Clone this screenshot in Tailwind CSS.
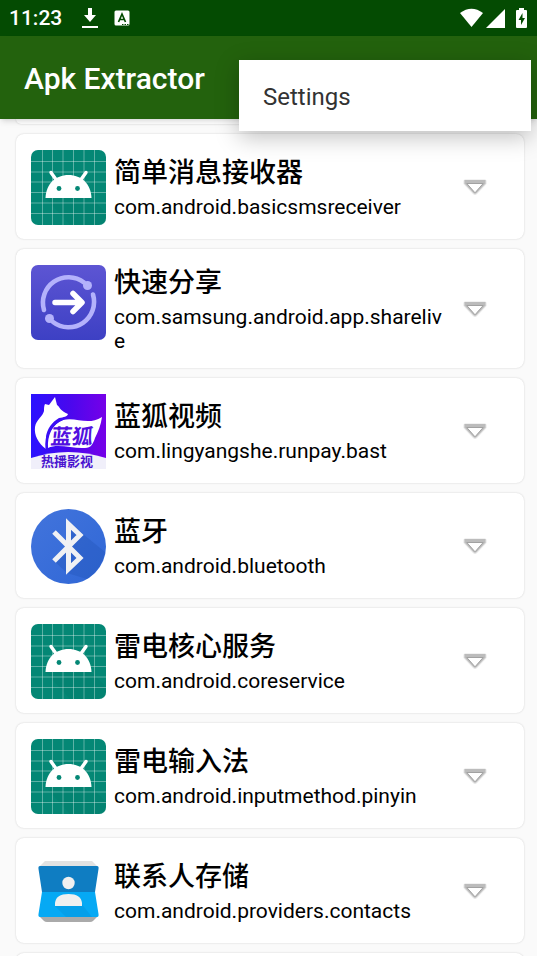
<!DOCTYPE html>
<html lang="zh-CN">
  <head>
    <meta charset="UTF-8" />
    <meta name="viewport" content="width=device-width, initial-scale=1.0" />
    <script src="https://cdn.jsdelivr.net/npm/@tailwindcss/browser@4"></script>
    <title>Apk Extractor</title>
  </head>
  <body class="relative flex h-screen flex-col overflow-hidden bg-[#fafafa] font-[Roboto,'Noto_Sans_CJK_SC',sans-serif] text-black">
    <!-- Shared icons -->
    <svg class="hidden">
      <symbol id="android" viewBox="0 0 75 75">
        <rect width="75" height="75" rx="7" fill="#048775" />
        <path d="M14.500 48 L39 75 H68 Q75 75 75 68 V63 L60 48 Z" fill="#027a69" opacity=".35" />
        <path d="M11.500 0V75M21.500 0V75M32 0V75M42.500 0V75M53 0V75M63.500 0V75M0 11.500H75M0 22H75M0 32H75M0 42.500H75M0 53H75M0 63.500H75" stroke="#fff" stroke-opacity=".45" stroke-width=".8" />
        <path d="M20 22.500l5 7M55 22.500l-5 7" stroke="#fff" stroke-width="3.400" stroke-linecap="round" />
        <path d="M14.500 48C15 34 24.500 25 37.500 25S60 34 60.500 48Z" fill="#fff" />
        <circle cx="28" cy="38.500" r="2.400" fill="#048775" />
        <circle cx="46.500" cy="38.500" r="2.400" fill="#048775" />
      </symbol>
      <symbol id="arrow" viewBox="0 0 24 18">
        <path d="M0.500 3Q.5 1.500 2 1.500H22Q23.500 1.500 23.500 3V6L14 16Q12 18 10 16L.5 6Z" fill="#000" opacity=".1" />
        <path d="M1.500 2H22.500V5.500L13.500 15Q12 16.500 10.500 15L1.500 5.500Z" fill="#bcbcbc" />
        <path d="M3.800 5.500H20.200L12 14.800Z" fill="#fff" stroke="#a2a2a2" stroke-width="1" />
      </symbol>
    </svg>

    <!-- Status bar -->
    <div class="flex h-9 shrink-0 items-center bg-[#044b02] pl-[9px] pr-[10px] text-white">
      <span class="text-[21px] leading-9 font-medium">11:23</span>
      <svg class="ml-5 h-5 w-4" viewBox="0 0 16 20" fill="#fff">
        <path d="M6 0h4v7h4l-6 7-6-7h4zM0 18h16v2H0z" />
      </svg>
      <svg class="ml-4 size-4" viewBox="0 0 16 16">
        <rect x=".5" y=".5" width="15" height="15" rx="1.500" fill="#fff" />
        <path d="M4.500 12L8 4L11.500 12M5.800 9.500H10.200" fill="none" stroke="#044b02" stroke-width="1.700" />
        <path d="M8 14.500H15" stroke="#044b02" stroke-dasharray="1.500 1" />
      </svg>
      <svg class="ml-auto h-5 w-[23px]" viewBox="0 0 23 20" fill="#fff">
        <path d="M0 5Q11.500-3.500 23 5L11.500 19Z" />
      </svg>
      <svg class="ml-[3px] size-[19px]" viewBox="0 0 19 19" fill="#fff">
        <path d="M0 19L19 0V19Z" />
      </svg>
      <svg class="ml-[11px] h-5 w-[11px]" viewBox="0 0 11 20">
        <path d="M3 0H8V2H10Q11 2 11 3V19Q11 20 10 20H1Q0 20 0 19V3Q0 2 1 2H3Z" fill="#fff" />
        <path d="M6.500 5L2.500 12H5V17L9 10H6.500Z" fill="#044b02" />
      </svg>
    </div>

    <!-- App bar -->
    <header class="z-10 flex h-[83px] shrink-0 items-center bg-[#23620d] px-6 pt-[2px] shadow-md">
      <h1 class="text-[30px] font-medium text-white">Apk Extractor</h1>
    </header>

    <!-- Overflow menu -->
    <div class="absolute top-[60px] right-[6px] z-20 w-[292px] bg-white shadow-[0_6px_22px_rgba(0,0,0,0.25)]">
      <button class="h-[71px] w-full px-6 pt-[2px] text-left text-[24px] text-[#333]">Settings</button>
    </div>

    <!-- App list -->
    <ul class="flex min-h-0 flex-1 flex-col gap-[10px] overflow-y-auto pr-[13px] pl-4 [scrollbar-width:none]">
      <li class="h-[5px] shrink-0 rounded-b-lg bg-white shadow-[0_0_2px_rgba(0,0,0,0.18)]"></li>

      <li class="flex min-h-[105px] shrink-0 rounded-lg bg-white pl-[15px] shadow-[0_0_2px_rgba(0,0,0,0.18)]">
        <svg class="mt-4 size-[75px] shrink-0"><use href="#android" /></svg>
        <div class="ml-2 flex min-w-0 flex-1 flex-col justify-center gap-[6px] pt-[2px]">
          <h2 class="text-[27px] leading-8 font-medium">简单消息接收器</h2>
          <p class="text-[21px] leading-6 break-all">com.android.basicsmsreceiver</p>
        </div>
        <button class="mr-[37px] ml-5 self-center" aria-label="简单消息接收器"><svg class="h-[18px] w-6"><use href="#arrow" /></svg></button>
      </li>

      <li class="flex min-h-[119px] shrink-0 rounded-lg bg-white pl-[15px] shadow-[0_0_2px_rgba(0,0,0,0.18)]">
        <svg class="mt-4 size-[75px] shrink-0" viewBox="0 0 75 75" fill="none">
          <linearGradient id="share" x2="0" y2="1"><stop stop-color="#5d55d3" /><stop offset="1" stop-color="#3d40c4" /></linearGradient>
          <rect width="75" height="75" rx="7" fill="url(#share)" />
          <path d="M13 45A25.500 25.500 0 0 1 53 17.500M62 29.500A25.500 25.500 0 0 1 22 57" stroke="#b4b2fb" stroke-width="4.600" stroke-linecap="round" />
          <circle cx="56.500" cy="20.500" r="4.500" fill="#b4b2fb" />
          <circle cx="18.500" cy="53.500" r="4.500" fill="#b4b2fb" />
          <path d="M24 37.500H50M42 28.500L51 37.500L42 46.500" stroke="#fff" stroke-width="5.500" stroke-linecap="round" stroke-linejoin="round" />
        </svg>
        <div class="ml-2 flex min-w-0 flex-1 flex-col justify-center gap-[6px] pt-[2px]">
          <h2 class="text-[27px] leading-8 font-medium">快速分享</h2>
          <p class="text-[21px] leading-6 break-all">com.samsung.android.app.sharelive</p>
        </div>
        <button class="mr-[37px] ml-5 self-center" aria-label="快速分享"><svg class="h-[18px] w-6"><use href="#arrow" /></svg></button>
      </li>

      <li class="flex min-h-[105px] shrink-0 rounded-lg bg-white pl-[15px] shadow-[0_0_2px_rgba(0,0,0,0.18)]">
        <svg class="mt-4 size-[75px] shrink-0" viewBox="0 0 75 75">
          <linearGradient id="fox" y2="0"><stop stop-color="#2a12ff" /><stop offset=".5" stop-color="#4808ee" /><stop offset="1" stop-color="#7600e8" /></linearGradient>
          <rect width="75" height="75" fill="url(#fox)" />
          <path d="M0 64Q37 52 75 64V75H0Z" fill="#f0effa" />
          <path d="M15 55C7 49 3 41 4 33C5 26 12 22 13 17C13 14 13 12 14 10L18 11L24 3L26 11C29 13 29 17 37 20C36 23 33 23 28 24C21 28 16 35 15 43Z" fill="#fff" />
          <path d="M17 54C16 42 21 30 32 26C46 23 57 32 71 23C70 31 67 38 64 44C62 50 60 54 54 54C42 55 27 49 17 54Z" fill="#fff" />
          <path d="M15.500 55C14 41 20 29 33 24.500" fill="none" stroke="#3a10f5" stroke-width="2" />
          <text x="26" y="50" transform="skewX(-8)" class="font-['Noto_Sans_CJK_SC',sans-serif] text-[21px] font-bold" fill="#5210df">蓝狐</text>
          <text x="10" y="72" class="font-['Noto_Sans_CJK_SC',sans-serif] text-[13px] leading-none font-bold" fill="#4a14d0">热播影视</text>
        </svg>
        <div class="ml-2 flex min-w-0 flex-1 flex-col justify-center gap-[6px] pt-[2px]">
          <h2 class="text-[27px] leading-8 font-medium">蓝狐视频</h2>
          <p class="text-[21px] leading-6 break-all">com.lingyangshe.runpay.bast</p>
        </div>
        <button class="mr-[37px] ml-5 self-center" aria-label="蓝狐视频"><svg class="h-[18px] w-6"><use href="#arrow" /></svg></button>
      </li>

      <li class="flex min-h-[105px] shrink-0 rounded-lg bg-white pl-[15px] shadow-[0_0_2px_rgba(0,0,0,0.18)]">
        <svg class="mt-4 size-[75px] shrink-0" viewBox="0 0 75 75">
          <linearGradient id="bt" x2="1" y2="1"><stop stop-color="#4274dc" /><stop offset="1" stop-color="#3067d6" /></linearGradient>
          <circle cx="37.500" cy="37.500" r="37.500" fill="url(#bt)" />
          <path d="M37 11L52 25L74 43Q71 60 56 70L36 64L23 52L35 38Z" fill="#1d4fae" opacity=".3" />
          <path d="M23 23L49 49L37.500 60V15L49 26L23 52" fill="none" stroke="#f0f1f4" stroke-width="5" />
        </svg>
        <div class="ml-2 flex min-w-0 flex-1 flex-col justify-center gap-[6px] pt-[2px]">
          <h2 class="text-[27px] leading-8 font-medium">蓝牙</h2>
          <p class="text-[21px] leading-6 break-all">com.android.bluetooth</p>
        </div>
        <button class="mr-[37px] ml-5 self-center" aria-label="蓝牙"><svg class="h-[18px] w-6"><use href="#arrow" /></svg></button>
      </li>

      <li class="flex min-h-[105px] shrink-0 rounded-lg bg-white pl-[15px] shadow-[0_0_2px_rgba(0,0,0,0.18)]">
        <svg class="mt-4 size-[75px] shrink-0"><use href="#android" /></svg>
        <div class="ml-2 flex min-w-0 flex-1 flex-col justify-center gap-[6px] pt-[2px]">
          <h2 class="text-[27px] leading-8 font-medium">雷电核心服务</h2>
          <p class="text-[21px] leading-6 break-all">com.android.coreservice</p>
        </div>
        <button class="mr-[37px] ml-5 self-center" aria-label="雷电核心服务"><svg class="h-[18px] w-6"><use href="#arrow" /></svg></button>
      </li>

      <li class="flex min-h-[105px] shrink-0 rounded-lg bg-white pl-[15px] shadow-[0_0_2px_rgba(0,0,0,0.18)]">
        <svg class="mt-4 size-[75px] shrink-0"><use href="#android" /></svg>
        <div class="ml-2 flex min-w-0 flex-1 flex-col justify-center gap-[6px] pt-[2px]">
          <h2 class="text-[27px] leading-8 font-medium">雷电输入法</h2>
          <p class="text-[21px] leading-6 break-all">com.android.inputmethod.pinyin</p>
        </div>
        <button class="mr-[37px] ml-5 self-center" aria-label="雷电输入法"><svg class="h-[18px] w-6"><use href="#arrow" /></svg></button>
      </li>

      <li class="flex min-h-[105px] shrink-0 rounded-lg bg-white pl-[15px] shadow-[0_0_2px_rgba(0,0,0,0.18)]">
        <svg class="mt-4 size-[75px] shrink-0" viewBox="0 0 75 75">
          <path d="M14 7H61L66 12H9Z" fill="#e2e2e2" />
          <path d="M8 62H67L62 67Q61 68 59 68H16Q14 68 13 67Z" fill="#aaa" />
          <path d="M9 12H66Q68 12 67.500 15L64 38H11L7.500 15Q7 12 9 12Z" fill="#0f7dc2" />
          <path d="M11 38H64L67.500 60Q68 63 66 63H9Q7 63 7.500 60Z" fill="#06a9f4" />
          <path d="M24 52L35 63H61L49 48Z" fill="#0288d1" opacity=".3" />
          <circle cx="37.500" cy="29" r="6.200" fill="#f0f0f0" />
          <path d="M24 52V49Q25 40 37.500 40T51 49V52Z" fill="#f0f0f0" />
        </svg>
        <div class="ml-2 flex min-w-0 flex-1 flex-col justify-center gap-[6px] pt-[2px]">
          <h2 class="text-[27px] leading-8 font-medium">联系人存储</h2>
          <p class="text-[21px] leading-6 break-all">com.android.providers.contacts</p>
        </div>
        <button class="mr-[37px] ml-5 self-center" aria-label="联系人存储"><svg class="h-[18px] w-6"><use href="#arrow" /></svg></button>
      </li>

      <li class="h-[105px] shrink-0 rounded-lg bg-white shadow-[0_0_2px_rgba(0,0,0,0.18)]"></li>
    </ul>
  </body>
</html>
